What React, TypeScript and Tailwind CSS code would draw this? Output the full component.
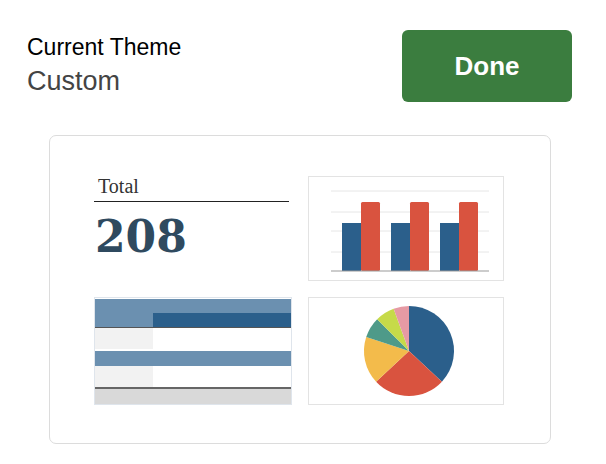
import React from "react";

const PIE = [
  { from: 0, to: 133, color: "#2b5f8b" },
  { from: 133, to: 227, color: "#d9533f" },
  { from: 227, to: 288, color: "#f3bb4b" },
  { from: 288, to: 315, color: "#4e9a89" },
  { from: 315, to: 340, color: "#c6da49" },
  { from: 340, to: 360, color: "#e69aa4" },
];

function slicePath(cx: number, cy: number, r: number, a: number, b: number) {
  const pt = (deg: number) => {
    const t = (deg * Math.PI) / 180;
    return `${(cx + r * Math.sin(t)).toFixed(2)} ${(cy - r * Math.cos(t)).toFixed(2)}`;
  };
  const large = b - a > 180 ? 1 : 0;
  return `M${cx} ${cy} L${pt(a)} A${r} ${r} 0 ${large} 1 ${pt(b)} Z`;
}

function BarChart() {
  const groups = [33, 82, 131];
  return (
    <svg width="194" height="103" viewBox="0 0 194 103">
      {[14, 35, 54, 75].map((y) => (
        <line key={y} x1="22" x2="180" y1={y} y2={y} stroke="#e6e6e6" strokeWidth="1" />
      ))}
      {groups.map((x) => (
        <g key={x}>
          <rect x={x} y="46" width="19" height="48" fill="#2b5f8b" />
          <rect x={x + 19} y="25" width="19" height="69" rx="1.5" fill="#d9533f" />
        </g>
      ))}
      <line x1="22" x2="180" y1="94" y2="94" stroke="#999" strokeWidth="1" />
    </svg>
  );
}

function PieChart() {
  return (
    <svg width="194" height="104" viewBox="0 0 194 104">
      {PIE.map((s) => (
        <path key={s.from} d={slicePath(100, 53, 45, s.from, s.to)} fill={s.color} />
      ))}
    </svg>
  );
}

function TablePreview() {
  return (
    <div className="flex h-[108px] flex-col border border-[#dfe5ec] pt-px">
      <div className="h-[14px] bg-[#6b90b0]" />
      <div className="flex h-[14px]">
        <div className="w-[58px] bg-[#6b90b0]" />
        <div className="flex-1 bg-[#2b5f8b]" />
      </div>
      <div className="h-px bg-[#555]" />
      <div className="flex h-[21px]">
        <div className="w-[58px] bg-[#f2f2f2]" />
        <div className="flex-1 bg-white" />
      </div>
      <div className="h-[2px] bg-white" />
      <div className="h-[15px] bg-[#6b90b0]" />
      <div className="flex h-[21px]">
        <div className="w-[58px] bg-[#f2f2f2]" />
        <div className="flex-1 bg-white" />
      </div>
      <div className="h-[2px] bg-[#666]" />
      <div className="flex-1 bg-[#d9d9d9]" />
    </div>
  );
}

export default function App() {
  return (
    <div className="h-[464px] w-[606px] bg-white font-['Liberation_Sans',Arial,sans-serif]">
      <div className="flex items-start justify-between pl-[27px] pr-[34px] pt-[30px]">
        <div className="mt-[4px]">
          <div className="text-[23px] leading-[26px] text-black">Current Theme</div>
          <div className="mt-[6px] text-[27px] leading-[30px] text-[#444]">Custom</div>
        </div>
        <button className="flex h-[72px] w-[170px] items-center justify-center rounded-[6px] bg-[#3b7d3f] text-[26px] font-bold text-white">
          Done
        </button>
      </div>

      <div className="ml-[49px] mt-[33px] h-[309px] w-[502px] rounded-[7px] border border-[#dcdcdc] pl-[44px] pt-[40px]">
        <div className="grid grid-cols-[198px_196px] grid-rows-[105px_108px] gap-[16px]">
          <div className="flex flex-col">
            <div className="pl-[4px] font-['Liberation_Serif',Georgia,serif] text-[20px] leading-[20px] text-[#333]">
              Total
            </div>
            <div className="mt-[5px] h-px w-[195px] bg-[#222]" />
            <div className="mt-[13px] pl-[1px] font-['DejaVu_Serif',Georgia,serif] text-[44px] font-bold leading-[44px] text-[#2f4a5f]">
              208
            </div>
          </div>
          <div className="border border-[#e3e3e3]">
            <BarChart />
          </div>
          <TablePreview />
          <div className="border border-[#e3e3e3]">
            <PieChart />
          </div>
        </div>
      </div>
    </div>
  );
}
